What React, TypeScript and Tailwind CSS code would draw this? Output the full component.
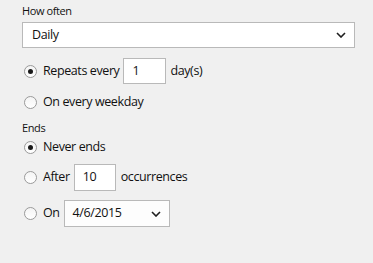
import React from 'react';

function Chevron({ className }: { className?: string }) {
  return (
    <svg className={className} width="10" height="6" viewBox="0 0 10 6" fill="none">
      <path d="M1 1l4 4 4-4" stroke="#1e1e1e" strokeWidth="1.6" />
    </svg>
  );
}

function Radio({ checked }: { checked?: boolean }) {
  return (
    <span className="ml-[2px] flex h-[13px] w-[13px] shrink-0 items-center justify-center rounded-full border border-[#9a9a9a] bg-gradient-to-b from-[#f4f4f4] to-[#ffffff]">
      {checked && <span className="h-[5px] w-[5px] rounded-full bg-[#1a1a1a]" />}
    </span>
  );
}

function Box({ value, w }: { value: string; w: string }) {
  return (
    <div className={`flex h-full items-center border border-[#b9b9b9] bg-white pl-[8px] ${w}`}>
      {value}
    </div>
  );
}

export default function App() {
  return (
    <div
      className="h-[263px] w-[373px] bg-[#f0f0f0] px-[22px] pt-[3px] text-[12.5px] text-[#111]"
      style={{ fontFamily: '"Open Sans", "Noto Sans", sans-serif', letterSpacing: '-0.4px' }}
    >
      <div className="h-[16px] text-[11px] leading-[16px]">How often</div>
      <div className="mt-[3px] flex h-[26px] w-[333px] items-center justify-between border border-[#b9b9b9] bg-white pl-[9px] pr-[8px]">
        <span>Daily</span>
        <Chevron />
      </div>

      <div className="mt-[10px] flex h-[26px] items-center">
        <Radio checked />
        <span className="ml-[6px]">Repeats every</span>
        <div className="ml-[4px] h-full">
          <Box value="1" w="w-[43px]" />
        </div>
        <span className="ml-[4px]">day(s)</span>
      </div>

      <div className="mt-[8px] flex h-[20px] items-center">
        <Radio />
        <span className="ml-[6px]">On every weekday</span>
      </div>

      <div className="mt-[8px] h-[16px] text-[11px] leading-[16px]">Ends</div>

      <div className="mt-[1px] flex h-[20px] items-center">
        <Radio checked />
        <span className="ml-[6px]">Never ends</span>
      </div>

      <div className="mt-[7px] flex h-[27px] items-center">
        <Radio />
        <span className="ml-[6px]">After</span>
        <div className="ml-[4px] h-full">
          <Box value="10" w="w-[42px]" />
        </div>
        <span className="ml-[5px]">occurrences</span>
      </div>

      <div className="mt-[9px] flex h-[27px] items-center">
        <Radio />
        <span className="ml-[6px]">On</span>
        <div className="ml-[4px] flex h-full w-[106px] items-center justify-between border border-[#b9b9b9] bg-[#fdfdfd] pl-[8px] pr-[8px]">
          <span>4/6/2015</span>
          <Chevron />
        </div>
      </div>
    </div>
  );
}
